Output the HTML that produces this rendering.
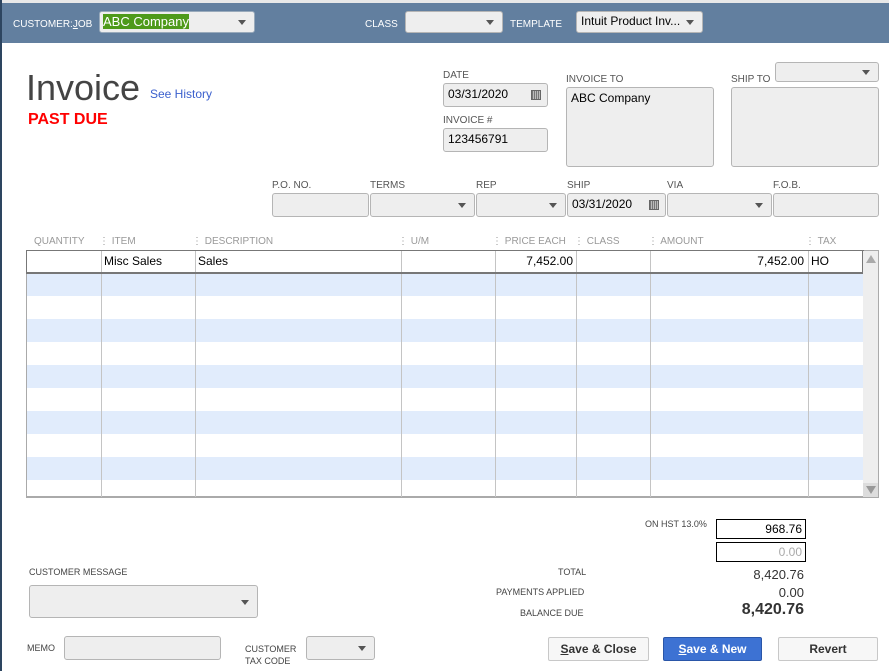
<!DOCTYPE html>
<html><head><meta charset="utf-8"><style>
*{box-sizing:border-box;margin:0;padding:0}
body{width:889px;height:671px;overflow:hidden;background:#fff;font-family:"Liberation Sans",Arial,sans-serif;position:relative;color:#000}
.a{position:absolute}
.lbl{position:absolute;font-size:10px;color:#555}
.hl{position:absolute;font-size:10px;color:#fff}
.box{position:absolute;background:#eee;border:1px solid #b5b5b5;border-radius:3px;font-size:13px;padding:3px 4px}
.dd::after{content:"";position:absolute;right:8px;top:50%;margin-top:-2px;border-left:4px solid transparent;border-right:4px solid transparent;border-top:5px solid #555}
.cal{position:absolute;right:6px;top:6px;width:10px;height:10px;background:repeating-linear-gradient(90deg,#777 0 1px,#bbb 1px 2px);border:1px solid #666}
.th{position:absolute;top:236px;font-size:10px;color:#999}
.vl{position:absolute;top:250px;height:247px;width:1px;background:#c4c4c4}
.row{position:absolute;left:27px;width:836px;height:23px;background:#e1ecfc}
.cell{position:absolute;top:254px;font-size:12px}
.btn{position:absolute;top:637px;height:24px;border:1px solid #c8c8c8;background:#f7f7f7;font-size:12px;font-weight:bold;color:#333;text-align:center;line-height:22px;border-radius:2px}
</style></head><body>
<div class="a" style="left:0;top:0;width:889px;height:3px;background:#e8e8e8"></div>
<div class="a" style="left:0;top:3px;width:889px;height:40px;background:#627f9f"></div>
<div class="a" style="left:0;top:0;width:2px;height:671px;background:#2d4560"></div>
<div class="hl" style="left:13px;top:19px">CUSTOMER:<u>J</u>OB</div>
<div class="box dd" style="left:99px;top:11px;width:156px;height:22px;border-color:#9ab;padding:2px 3px"><span style="background:#4e9a1a;color:#fff;font-size:13px">ABC Company</span></div>
<div class="hl" style="left:365px;top:19px">CLASS</div>
<div class="box dd" style="left:405px;top:11px;width:98px;height:22px"></div>
<div class="hl" style="left:510px;top:19px">TEMPLATE</div>
<div class="box dd" style="left:576px;top:11px;width:127px;height:22px;padding:2px 4px 0;font-size:12px">Intuit Product Inv...</div>

<div class="a" style="left:26px;top:67px;font-size:36px;color:#444">Invoice</div>
<div class="a" style="left:150px;top:87px;font-size:12px;color:#3a5fcd">See History</div>
<div class="a" style="left:28px;top:111px;font-size:16px;font-weight:bold;color:#f00">PAST DUE</div>

<div class="lbl" style="left:443px;top:70px">DATE</div>
<div class="box" style="left:443px;top:83px;width:105px;height:24px;font-size:12px">03/31/2020<span class="cal"></span></div>
<div class="lbl" style="left:443px;top:115px">INVOICE #</div>
<div class="box" style="left:443px;top:128px;width:105px;height:24px;font-size:12px">123456791</div>
<div class="lbl" style="left:566px;top:74px">INVOICE TO</div>
<div class="box" style="left:566px;top:87px;width:148px;height:80px;font-size:12px">ABC Company</div>
<div class="lbl" style="left:731px;top:74px">SHIP TO</div>
<div class="box dd" style="left:775px;top:62px;width:104px;height:20px"></div>
<div class="box" style="left:731px;top:87px;width:148px;height:80px"></div>

<div class="lbl" style="left:272px;top:180px">P.O. NO.</div>
<div class="lbl" style="left:370px;top:180px">TERMS</div>
<div class="lbl" style="left:476px;top:180px">REP</div>
<div class="lbl" style="left:567px;top:180px">SHIP</div>
<div class="lbl" style="left:667px;top:180px">VIA</div>
<div class="lbl" style="left:773px;top:180px">F.O.B.</div>
<div class="box" style="left:272px;top:193px;width:97px;height:24px"></div>
<div class="box dd" style="left:370px;top:193px;width:105px;height:24px"></div>
<div class="box dd" style="left:476px;top:193px;width:90px;height:24px"></div>
<div class="box" style="left:567px;top:193px;width:99px;height:24px;font-size:12px">03/31/2020<span class="cal"></span></div>
<div class="box dd" style="left:667px;top:193px;width:105px;height:24px"></div>
<div class="box" style="left:773px;top:193px;width:106px;height:24px"></div>

<div class="th" style="left:34px">QUANTITY</div>
<div class="th" style="left:99px">⋮ ITEM</div>
<div class="th" style="left:192px">⋮ DESCRIPTION</div>
<div class="th" style="left:398px">⋮ U/M</div>
<div class="th" style="left:492px">⋮ PRICE EACH</div>
<div class="th" style="left:574px">⋮ CLASS</div>
<div class="th" style="left:648px">⋮ AMOUNT</div>
<div class="th" style="left:805px">⋮ TAX</div>

<div class="a" style="left:26px;top:250px;width:853px;height:248px;border:1px solid #aaa;border-bottom:2px solid #aaa"></div>
<div class="row" style="top:273px"></div>
<div class="row" style="top:319px"></div>
<div class="row" style="top:365px"></div>
<div class="row" style="top:411px"></div>
<div class="row" style="top:457px"></div>
<div class="vl" style="left:101px"></div>
<div class="vl" style="left:195px"></div>
<div class="vl" style="left:401px"></div>
<div class="vl" style="left:495px"></div>
<div class="vl" style="left:576px"></div>
<div class="vl" style="left:650px"></div>
<div class="vl" style="left:808px"></div>
<div class="a" style="left:26px;top:250px;width:838px;height:24px;border:2px solid #777;border-width:1px 2px 2px 1px"></div>
<div class="a" style="left:863px;top:251px;width:15px;height:245px;background:#eee"></div>
<div class="a" style="left:866px;top:255px;border-left:5px solid transparent;border-right:5px solid transparent;border-bottom:8px solid #aaa"></div>
<div class="a" style="left:863px;top:483px;width:15px;height:14px;background:#ddd"></div>
<div class="a" style="left:866px;top:486px;border-left:5px solid transparent;border-right:5px solid transparent;border-top:8px solid #999"></div>
<div class="cell" style="left:104px">Misc Sales</div>
<div class="cell" style="left:198px">Sales</div>
<div class="cell" style="left:495px;width:78px;text-align:right">7,452.00</div>
<div class="cell" style="left:650px;width:154px;text-align:right">7,452.00</div>
<div class="cell" style="left:811px">HO</div>

<div class="lbl" style="left:645px;top:519px;font-size:9px;color:#444">ON HST 13.0%</div>
<div class="a" style="left:716px;top:519px;width:90px;height:20px;border:1px solid #000;font-size:12px;text-align:right;padding:2px 3px">968.76</div>
<div class="a" style="left:716px;top:542px;width:90px;height:20px;border:1px solid #000;font-size:12px;text-align:right;padding:2px 3px;color:#aaa">0.00</div>
<div class="lbl" style="left:29px;top:567px;color:#444;font-size:9px">CUSTOMER MESSAGE</div>
<div class="box dd" style="left:29px;top:585px;width:229px;height:33px"></div>
<div class="lbl" style="left:558px;top:567px;color:#444;font-size:9px">TOTAL</div>
<div class="lbl" style="left:496px;top:587px;color:#444;font-size:9px">PAYMENTS APPLIED</div>
<div class="lbl" style="left:520px;top:608px;color:#444;font-size:9px">BALANCE DUE</div>
<div class="a" style="left:700px;top:567px;width:104px;text-align:right;font-size:13px;color:#333">8,420.76</div>
<div class="a" style="left:700px;top:585px;width:104px;text-align:right;font-size:13px;color:#333">0.00</div>
<div class="a" style="left:700px;top:601px;width:104px;text-align:right;font-size:16px;font-weight:bold;color:#333">8,420.76</div>

<div class="lbl" style="left:27px;top:643px;color:#444;font-size:9px">MEMO</div>
<div class="box" style="left:64px;top:636px;width:157px;height:24px"></div>
<div class="lbl" style="left:245px;top:643px;color:#444;font-size:9px;line-height:12px">CUSTOMER<br>TAX CODE</div>
<div class="box dd" style="left:306px;top:636px;width:69px;height:24px"></div>
<div class="btn" style="left:548px;width:101px"><span style="text-decoration:underline">S</span>ave &amp; Close</div>
<div class="btn" style="left:663px;width:99px;background:#3d72d3;border-color:#2a56a8;color:#fff"><span style="text-decoration:underline">S</span>ave &amp; New</div>
<div class="btn" style="left:778px;width:100px">Revert</div>
</body></html>
